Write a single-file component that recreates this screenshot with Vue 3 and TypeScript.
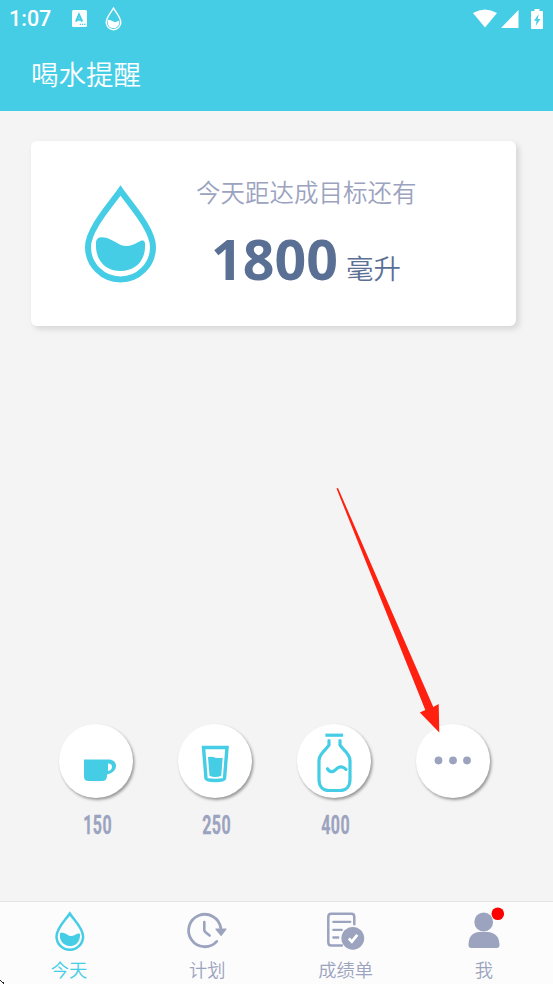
<script setup lang="ts">
interface Drink {
  kind: 'cup' | 'glass' | 'bottle' | 'more'
  amount: string
}

interface Tab {
  kind: 'today' | 'plan' | 'report' | 'me'
  label: string
}

const drinks: Drink[] = [
  { kind: 'cup', amount: '150' },
  { kind: 'glass', amount: '250' },
  { kind: 'bottle', amount: '400' },
  { kind: 'more', amount: '' },
]

const tabs: Tab[] = [
  { kind: 'today', label: '今天' },
  { kind: 'plan', label: '计划' },
  { kind: 'report', label: '成绩单' },
  { kind: 'me', label: '我' },
]
</script>

<template>
  <div class="screen">
    <header class="header">
      <div class="status">
        <span class="time">1:07</span>
        <svg class="lang" width="15" height="17" viewBox="0 0 15 17">
          <rect width="15" height="17" rx="1.5" fill="#fff" />
          <path d="M4 11.600 7 4.600 10.200 11.600M5.200 9.600h3.800" fill="none" stroke="#45cde6" stroke-width="2.100" />
          <path d="M7.700 14.400h1.300M10 14.400h1.300M12.200 14.400h1.300" stroke="#45cde6" stroke-width="1.200" />
        </svg>
        <svg class="mini-drop" width="17" height="24" viewBox="0 0 71 98" preserveAspectRatio="none">
          <path d="M35.500 5C31 13 5 43 5 62.500a30.500 30.500 0 0 0 61 0C66 43 40 13 35.500 5Z" fill="none" stroke="#fff" stroke-width="6" />
          <path d="M11 57c0-5 4-5 8-4 10 1 15 9 25 8 8-1 16-10 16-2 0 17-10 27-24.500 27S11 77 11 57Z" fill="#fff" />
        </svg>
        <div class="signals">
          <svg width="24" height="19" viewBox="0 0 24 19">
            <path d="M0 4Q12-3.200 24 4L12 18.500Z" fill="#fff" />
          </svg>
          <svg class="cell" width="18" height="18" viewBox="0 0 18 18">
            <path d="M17.500 0v18H0Z" fill="#fff" />
          </svg>
          <svg width="12" height="20" viewBox="0 0 12 20">
            <path d="M3.500 0h5v2H11q1 0 1 1v16q0 1-1 1H1q-1 0-1-1V3q0-1 1-1h2.500Z" fill="#fff" />
            <path d="M7.700 5 3 11.700h2.600L4.700 17l4.700-7H6.600Z" fill="#45cde6" />
          </svg>
        </div>
      </div>
      <h1 class="title">喝水提醒</h1>
    </header>

    <main class="main">
      <section class="card">
        <svg class="big-drop" width="71" height="98" viewBox="0 0 71 98">
          <path d="M35.500 5.500C27 18 3 44 3 62a32.500 32.500 0 0 0 65 0C68 44 44 18 35.500 5.500Z" fill="none" stroke="#45cde6" stroke-width="6" />
          <path d="M11 58C11 51 18 52 22 53C31 56 35 62 43 61C50 60 54 56 57 55.500Q60 55 60 59C61 76 50 86 35.500 86S10 76 11 58Z" fill="#45cde6" />
        </svg>
        <div class="goal">
          <p class="goal-label">今天距达成目标还有</p>
          <p class="goal-value"><strong>1800</strong><span>毫升</span></p>
        </div>
      </section>

      <section class="drinks">
        <div v-for="drink in drinks" :key="drink.kind" class="drink">
          <button class="circle" type="button">
            <svg v-if="drink.kind === 'cup'" width="74" height="74" viewBox="0 0 74 74">
              <path d="M25 35.500H49.500c4.500 0 7.500 2.500 7.500 6.500 0 5-5 7.500-9 8.500v1.500q0 5-5 5H29.500q-4.500 0-4.500-4.500Z" fill="#45cde6" />
              <path d="M49 39.500c3 0 4 1.500 4 3.500s-1.500 3.500-4 4Z" fill="#fff" />
            </svg>
            <svg v-else-if="drink.kind === 'glass'" width="74" height="74" viewBox="0 0 74 74">
              <path d="M25.500 23.500h23.500l-2.500 31q0 2-9.200 2t-9.300-2Z" fill="none" stroke="#45cde6" stroke-width="3.400" />
              <path d="M30 33q4-.800 7.500.700 3.500.800 7.200 0l-1.500 18q-6 2.500-11.700 0Z" fill="#45cde6" />
            </svg>
            <svg v-else-if="drink.kind === 'bottle'" width="74" height="74" viewBox="0 0 74 74">
              <g fill="none" stroke="#45cde6" stroke-width="3.200" stroke-linecap="round">
                <path d="M30 11.200h14.500" stroke-linecap="square" />
                <path d="M32 16.500v4.500c-1 3-10 8-10 15.500v19c0 7 4 11 10 11h11c6 0 10-4 10-11v-19c0-7.500-9-12.500-10-15.500v-4.500" />
                <path d="M30.500 44.800c2.500 4 6 3.200 8.500.500 3.500-4 7.500-2.500 10 0" />
              </g>
            </svg>
            <svg v-else width="74" height="74" viewBox="0 0 74 74" fill="#9ba3bf">
              <circle cx="22.500" cy="36.500" r="3.900" />
              <circle cx="37" cy="36.500" r="3.900" />
              <circle cx="51" cy="36.500" r="3.900" />
            </svg>
          </button>
          <span class="amount">{{ drink.amount }}</span>
        </div>
      </section>
    </main>

    <nav class="tabs">
      <a v-for="tab in tabs" :key="tab.kind" class="tab" :class="{ active: tab.kind === 'today' }">
        <svg v-if="tab.kind === 'today'" class="tab-icon" width="44" height="42" viewBox="0 0 44 42">
          <path d="M22.800 4.500C19 10.500 9.500 19 9.500 27.500a13.300 13.300 0 0 0 26.600 0C36.100 19 26.500 10.500 22.800 4.500Z" fill="none" stroke="currentColor" stroke-width="2.500" />
          <path d="M12.800 26c0-3 2-3 4-2 3 1 5 3.500 8 3 3-.500 5-2.500 7-2.500 1.500 0 1.500 1 1 4-1 6-5 8.500-10 8.500s-10-4-10-11Z" fill="currentColor" />
        </svg>
        <svg v-else-if="tab.kind === 'plan'" class="tab-icon" width="44" height="42" viewBox="0 0 44 42">
          <g fill="none" stroke="currentColor" stroke-linecap="round">
            <path d="M35.800 19A16.200 16.200 0 1 0 31.800 32.400" stroke-width="2.800" />
            <path d="M19.300 13v8q0 1 1 2l4.300 3.500" stroke-width="2.600" />
          </g>
          <path d="M31 19.500h10q1 0 .400.900l-4.600 6.200q-.700.800-1.400 0l-4.900-6.200q-.600-.900.500-.900Z" fill="currentColor" />
        </svg>
        <svg v-else-if="tab.kind === 'report'" class="tab-icon" width="44" height="42" viewBox="0 0 44 42">
          <g transform="translate(-1.200 .3)">
            <g fill="none" stroke="currentColor" stroke-width="2.500" stroke-linecap="round">
              <path d="M19 36.200H8.500q-3 0-3-3V7.400q0-3 3-3h20q3 0 3 3V15" />
              <path d="M10.500 12.500h17M10.500 20.500h8.500M10.500 28.200h5" stroke-width="2.300" />
            </g>
            <circle cx="30" cy="29" r="11.400" fill="currentColor" />
            <path d="m26 29.300 3 3 5.500-6.800" fill="none" stroke="#fff" stroke-width="2.800" />
          </g>
        </svg>
        <svg v-else class="tab-icon" width="44" height="42" viewBox="0 0 44 42">
          <circle cx="21.700" cy="13" r="9.400" fill="currentColor" />
          <path d="M6.500 36c0-8 4-13 11-13h8c7 0 12 5 12 13q0 3-3 3h-25q-3 0-3-3Z" fill="currentColor" />
          <circle cx="35.800" cy="4.800" r="6.300" fill="#f00" />
        </svg>
        <span>{{ tab.label }}</span>
      </a>
    </nav>

    <svg class="pointer" width="104" height="246" viewBox="0 0 104 246">
      <path d="M.500 1.500 2 1 97.300 220 102.700 217 103.300 245.500 83.800 225.500 89.300 223Z" fill="#ff2010" />
    </svg>
    <svg class="corner" width="5" height="5" viewBox="0 0 5 5">
      <path d="M0 1h1v1H0zM1 2h1v1H1zM2 3h2v1H2zM3 4h1v1H3z" fill="#222" />
    </svg>
  </div>
</template>

<style>
body {
  margin: 0;
}
</style>

<style scoped>
.screen {
  position: relative;
  display: flex;
  flex-direction: column;
  width: 553px;
  height: 984px;
  overflow: hidden;
  background: #f4f4f4;
  font-family: "Noto Sans CJK SC", sans-serif;
  font-weight: 350;
}

.header {
  height: 111px;
  background: #45cde6;
  color: #fff;
}

.status {
  display: flex;
  align-items: center;
  height: 37px;
  padding: 0 10px 0 9px;
}

.time {
  width: 63px;
  font: 500 21.500px/38px Roboto, sans-serif;
}

.mini-drop {
  margin-left: 18px;
}

.signals {
  display: flex;
  align-items: center;
  margin-left: auto;
}

.cell {
  margin: 0 12px 0 4px;
}

.title {
  margin: 16px 0 0 31px;
  font-size: 27.500px;
  font-weight: 350;
  line-height: 40px;
}

.main {
  display: flex;
  flex: 1;
  flex-direction: column;
  justify-content: space-between;
  padding: 30px 37px 0 31px;
}

.card {
  display: flex;
  height: 185px;
  border-radius: 6px;
  background: #fff;
  box-shadow: 3px 3px 6px rgba(0, 0, 0, 0.13);
}

.big-drop {
  margin: 44px 0 0 54px;
}

.goal {
  margin: 33px 0 0 40px;
}

.goal-label {
  margin: 0;
  color: #9ba3bf;
  font-size: 24.500px;
  line-height: 36px;
}

.goal-value {
  display: flex;
  align-items: baseline;
  margin: 8px 0 0 15px;
  color: #5a6f94;
  line-height: 80px;
}

.goal-value strong {
  font: 700 55.500px/80px "Noto Sans", sans-serif;
  transform: translateY(1px);
}

.goal-value span {
  margin-left: 8px;
  font-size: 27.500px;
}

.drinks {
  display: grid;
  grid-template-columns: repeat(4, 119px);
  height: 177px;
  margin-left: 5px;
}

.drink {
  display: flex;
  flex-direction: column;
  align-items: center;
}

.circle {
  width: 74px;
  height: 74px;
  padding: 0;
  border: 0;
  border-radius: 50%;
  background: #fff;
  box-shadow: 1.500px 2px 3px rgba(0, 0, 0, 0.38);
}

.circle svg {
  display: block;
}

.amount {
  margin: 13px 0 0 4px;
  color: #9ba3bf;
  font: 700 25px/30px Roboto, sans-serif;
  letter-spacing: 0.700px;
  transform: scaleX(0.64);
  -webkit-text-stroke: 0.300px #9ba3bf;
}

.tabs {
  display: grid;
  grid-template-columns: repeat(4, 1fr);
  box-sizing: border-box;
  height: 83px;
  border-top: 1px solid #e5e5e5;
  background: #fcfcfc;
}

.tab {
  display: flex;
  flex-direction: column;
  align-items: center;
  color: #9ba3bf;
  font-size: 18.300px;
  line-height: 26px;
}

.tab.active {
  color: #45cde6;
}

.tab-icon {
  margin: 7px 0 5px;
  overflow: visible;
}

.pointer {
  position: absolute;
  top: 487px;
  left: 336px;
}

.corner {
  position: absolute;
  bottom: 0;
  left: 0;
}
</style>
